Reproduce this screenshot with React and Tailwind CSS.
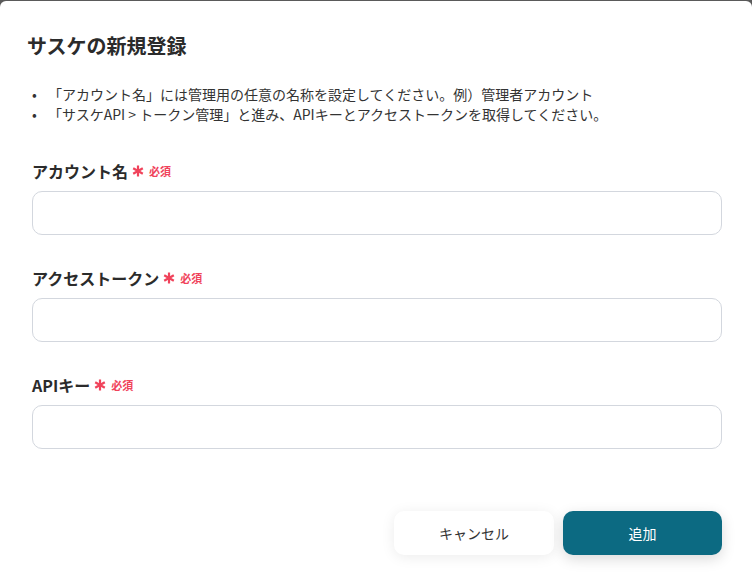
import React from "react";

function Star() {
  return (
    <svg width="12" height="12" viewBox="0 0 12 12" className="ml-[4px]">
      <g stroke="#f0435b" strokeWidth="2.2" strokeLinecap="butt">
        <line x1="6" y1="0.5" x2="6" y2="11.5" />
        <line x1="1.2" y1="3.2" x2="10.8" y2="8.8" />
        <line x1="1.2" y1="8.8" x2="10.8" y2="3.2" />
      </g>
    </svg>
  );
}

function Field({ label }) {
  return (
    <div className="flex flex-col">
      <div className="flex items-center h-[22px]">
        <span className="text-[16px] font-bold text-[#2b2b2b]">{label}</span>
        <Star />
        <span className="ml-[5px] text-[#f0435b] text-[11px] font-bold">必須</span>
      </div>
      <div className="mt-[9px] h-[44px] rounded-[10px] border border-[#d3d7de] bg-white" />
    </div>
  );
}

export default function App() {
  return (
    <div className="w-[752px] h-[583px] bg-[#5a5a5a] pt-[1px] overflow-hidden" style={{ fontFamily: '"Noto Sans CJK JP", "Noto Sans", sans-serif' }}>
      <div className="h-[582px] bg-white rounded-t-[6px] px-[32px]">
        <h1 className="pt-[31px] ml-[-5px] text-[20px] font-bold text-[#2b2b2b] leading-[28px]">サスケの新規登録</h1>
        <ul className="mt-[24px] text-[14px] text-[#333] leading-[20px]">
          <li className="flex">
            <span className="w-[16px]">•</span>
            <span>「アカウント名」には管理用の任意の名称を設定してください。例）管理者アカウント</span>
          </li>
          <li className="flex">
            <span className="w-[16px]">•</span>
            <span>「サスケAPI &gt; トークン管理」と進み、APIキーとアクセストークンを取得してください。</span>
          </li>
        </ul>
        <div className="mt-[36px] mr-[-2px] flex flex-col gap-[32px]">
          <Field label="アカウント名" />
          <Field label="アクセストークン" />
          <Field label="APIキー" />
        </div>
        <div className="mt-[62px] mr-[-2px] flex justify-end gap-[9px]">
          <button className="w-[160px] h-[44px] rounded-[10px] bg-white text-[14px] text-[#333] shadow-[0_2px_14px_rgba(0,0,0,0.08)]">キャンセル</button>
          <button className="w-[159px] h-[44px] rounded-[10px] bg-[#0c6a82] text-[14px] text-white shadow-[0_4px_14px_rgba(0,0,0,0.15)]">追加</button>
        </div>
      </div>
    </div>
  );
}
